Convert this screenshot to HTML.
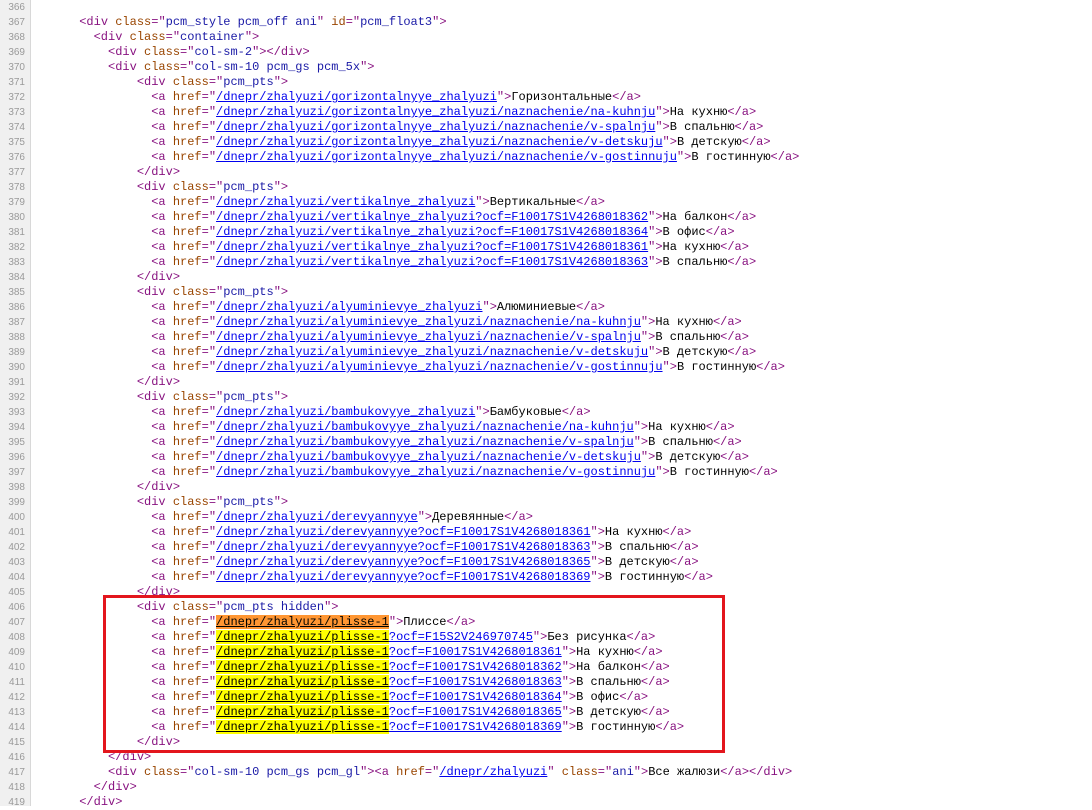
<!DOCTYPE html>
<html><head><meta charset="utf-8"><style>
html,body{margin:0;padding:0;background:#fff;width:1092px;height:806px;overflow:hidden}
#g{position:absolute;left:0;top:0;width:30px;height:806px;background:#f0f0f0;border-right:1px solid #d8d8d8}
.l{position:absolute;left:0;height:15px;line-height:15px;white-space:pre;font-family:"Liberation Mono","Noto Sans CJK SC",monospace;font-size:12px;color:#000}
.n{position:absolute;left:0;width:25px;text-align:right;font-family:"Liberation Sans",sans-serif;font-size:10px;color:#999;height:15px;line-height:15px}
.c{position:absolute;left:36px}
.t{color:#881280}.at{color:#994500}.v{color:#1a1aa6}.a{color:#0000ee;text-decoration:underline}
.y{background:#ffff00;color:#000;text-decoration:underline}
.o{background:#ff9632;color:#000;text-decoration:underline}
#box{position:absolute;left:103px;top:595px;width:616px;height:152px;border:3px solid #e3161d}
</style></head><body>
<div id="g"></div>
<div id="lines"></div>
<div id="box"></div>
<script>
var L=[
"",
'      <t>&lt;div </t><n>class</n><t>="</t><v>pcm_style pcm_off ani</v><t>" </t><n>id</n><t>="</t><v>pcm_float3</v><t>"&gt;</t>',
'        <t>&lt;div </t><n>class</n><t>="</t><v>container</v><t>"&gt;</t>',
'          <t>&lt;div </t><n>class</n><t>="</t><v>col-sm-2</v><t>"&gt;&lt;/div&gt;</t>',
'          <t>&lt;div </t><n>class</n><t>="</t><v>col-sm-10 pcm_gs pcm_5x</v><t>"&gt;</t>',
];
function P(h,x){return '                <t>&lt;a </t><n>href</n><t>="</t><a>'+h+'</a><t>"&gt;</t>'+x+'<t>&lt;/a&gt;</t>';}
function D(){return '              <t>&lt;div </t><n>class</n><t>="</t><v>pcm_pts</v><t>"&gt;</t>';}
var E='              <t>&lt;/div&gt;</t>';
var groups=[
["/dnepr/zhalyuzi/gorizontalnyye_zhalyuzi","Горизонтальные",[["/dnepr/zhalyuzi/gorizontalnyye_zhalyuzi/naznachenie/na-kuhnju","На кухню"],["/dnepr/zhalyuzi/gorizontalnyye_zhalyuzi/naznachenie/v-spalnju","В спальню"],["/dnepr/zhalyuzi/gorizontalnyye_zhalyuzi/naznachenie/v-detskuju","В детскую"],["/dnepr/zhalyuzi/gorizontalnyye_zhalyuzi/naznachenie/v-gostinnuju","В гостинную"]]],
["/dnepr/zhalyuzi/vertikalnye_zhalyuzi","Вертикальные",[["/dnepr/zhalyuzi/vertikalnye_zhalyuzi?ocf=F10017S1V4268018362","На балкон"],["/dnepr/zhalyuzi/vertikalnye_zhalyuzi?ocf=F10017S1V4268018364","В офис"],["/dnepr/zhalyuzi/vertikalnye_zhalyuzi?ocf=F10017S1V4268018361","На кухню"],["/dnepr/zhalyuzi/vertikalnye_zhalyuzi?ocf=F10017S1V4268018363","В спальню"]]],
["/dnepr/zhalyuzi/alyuminievye_zhalyuzi","Алюминиевые",[["/dnepr/zhalyuzi/alyuminievye_zhalyuzi/naznachenie/na-kuhnju","На кухню"],["/dnepr/zhalyuzi/alyuminievye_zhalyuzi/naznachenie/v-spalnju","В спальню"],["/dnepr/zhalyuzi/alyuminievye_zhalyuzi/naznachenie/v-detskuju","В детскую"],["/dnepr/zhalyuzi/alyuminievye_zhalyuzi/naznachenie/v-gostinnuju","В гостинную"]]],
["/dnepr/zhalyuzi/bambukovyye_zhalyuzi","Бамбуковые",[["/dnepr/zhalyuzi/bambukovyye_zhalyuzi/naznachenie/na-kuhnju","На кухню"],["/dnepr/zhalyuzi/bambukovyye_zhalyuzi/naznachenie/v-spalnju","В спальню"],["/dnepr/zhalyuzi/bambukovyye_zhalyuzi/naznachenie/v-detskuju","В детскую"],["/dnepr/zhalyuzi/bambukovyye_zhalyuzi/naznachenie/v-gostinnuju","В гостинную"]]],
["/dnepr/zhalyuzi/derevyannyye","Деревянные",[["/dnepr/zhalyuzi/derevyannyye?ocf=F10017S1V4268018361","На кухню"],["/dnepr/zhalyuzi/derevyannyye?ocf=F10017S1V4268018363","В спальню"],["/dnepr/zhalyuzi/derevyannyye?ocf=F10017S1V4268018365","В детскую"],["/dnepr/zhalyuzi/derevyannyye?ocf=F10017S1V4268018369","В гостинную"]]]
];
groups.forEach(function(g){L.push(D());L.push(P(g[0],g[1]));g[2].forEach(function(s){L.push(P(s[0],s[1]));});L.push(E);});
L.push('              <t>&lt;div </t><n>class</n><t>="</t><v>pcm_pts hidden</v><t>"&gt;</t>');
function Q(cls,q,x){return '                <t>&lt;a </t><n>href</n><t>="</t><'+cls+'>/dnepr/zhalyuzi/plisse-1</'+cls+'>'+(q?'<a>'+q+'</a>':'')+'<t>"&gt;</t>'+x+'<t>&lt;/a&gt;</t>';}
L.push(Q('o','',"Плиссе"));
[["?ocf=F15S2V246970745","Без рисунка"],["?ocf=F10017S1V4268018361","На кухню"],["?ocf=F10017S1V4268018362","На балкон"],["?ocf=F10017S1V4268018363","В спальню"],["?ocf=F10017S1V4268018364","В офис"],["?ocf=F10017S1V4268018365","В детскую"],["?ocf=F10017S1V4268018369","В гостинную"]].forEach(function(s){L.push(Q('y',s[0],s[1]));});
L.push(E);
L.push('          <t>&lt;/div&gt;</t>');
L.push('          <t>&lt;div </t><n>class</n><t>="</t><v>col-sm-10 pcm_gs pcm_gl</v><t>"&gt;&lt;a </t><n>href</n><t>="</t><a>/dnepr/zhalyuzi</a><t>" </t><n>class</n><t>="</t><v>ani</v><t>"&gt;</t>Все жалюзи<t>&lt;/a&gt;&lt;/div&gt;</t>');
L.push('        <t>&lt;/div&gt;</t>');
L.push('      <t>&lt;/div&gt;</t>');
var h='';
L.forEach(function(s,i){
 s=s.replace(/<t>/g,'<span class="t">').replace(/<\/t>/g,'</span>')
  .replace(/<n>/g,'<span class="at">').replace(/<\/n>/g,'</span>')
  .replace(/<v>/g,'<span class="v">').replace(/<\/v>/g,'</span>')
  .replace(/<a>/g,'<span class="a">').replace(/<\/a>/g,'</span>')
  .replace(/<y>/g,'<span class="y">').replace(/<\/y>/g,'</span>')
  .replace(/<o>/g,'<span class="o">').replace(/<\/o>/g,'</span>');
 h+='<div class="l" style="top:'+(i*15)+'px"><span class="n">'+(366+i)+'</span><span class="c">'+s+'</span></div>';
});
document.getElementById('lines').innerHTML=h;
</script>
</body></html>
